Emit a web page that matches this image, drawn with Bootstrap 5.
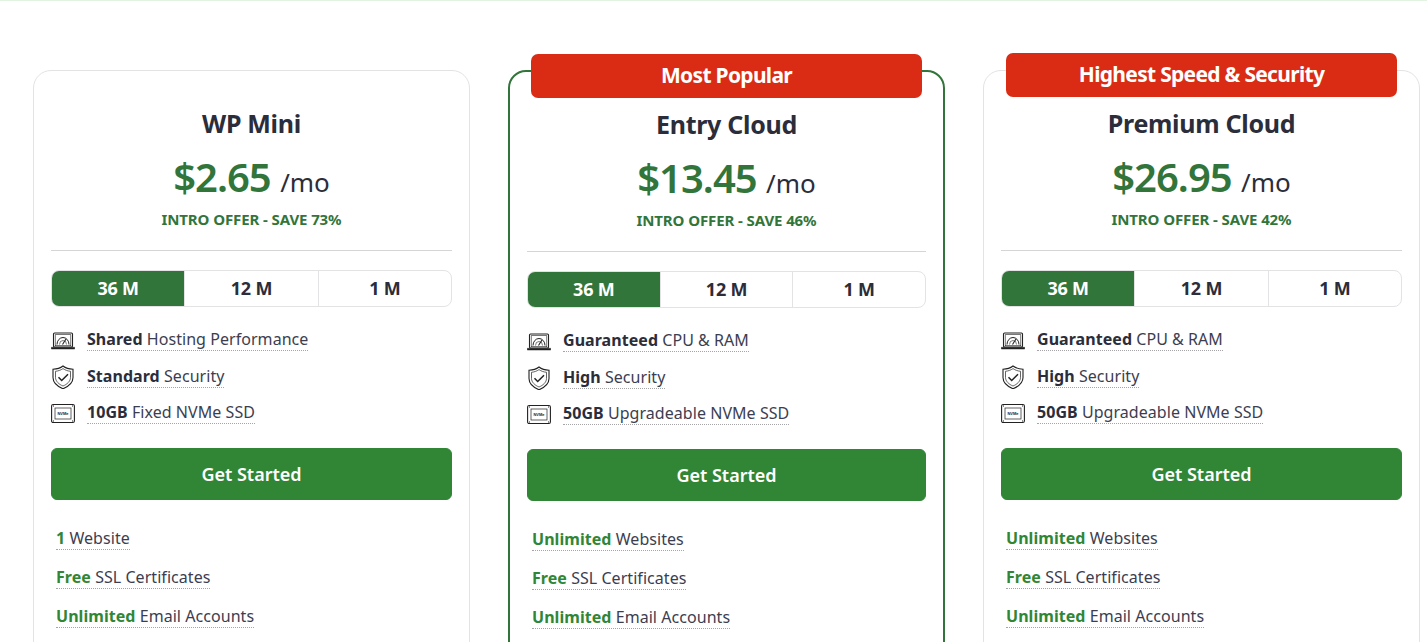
<!DOCTYPE html>
<html>
<head>
  <title>Cloud Hosting Plans</title>
  <link href="https://cdn.jsdelivr.net/npm/bootstrap@5.3.2/dist/css/bootstrap.min.css" rel="stylesheet">
  <style>
    html, body { height: 642px; overflow: hidden; }
    body { font-family: "Noto Sans", sans-serif; color: #2b2d3a; background: #fff; border-top: 1px solid #e2f3e2; }
    .plans { padding: 69px 0 0 33px; gap: 38px; }
    .plan { width: 437px; height: 640px; flex: none; border: 1px solid #e3e3e6; border-radius: 18px; padding: 0 17px; position: relative; text-align: center; }
    .plan-hot { border: 2px solid #32753a; }
    .ribbon { position: absolute; left: 21px; top: -18px; width: 391px; height: 44px; background: #da2c15; color: #fff; border-radius: 7px; font: 700 21px/42px "Noto Sans", sans-serif; letter-spacing: -.7px; }
    .plan-top .ribbon { left: 22px; }
    .plan-name { font-size: 25px; font-weight: 700; margin: 34px 0 0; line-height: 36px; letter-spacing: -.3px; }
    .price { color: #32753a; font-size: 40px; font-weight: 600; line-height: 56px; margin-top: 8px; letter-spacing: -1px; }
    .per { color: #2b2d3a; font-size: 26px; font-weight: 400; letter-spacing: 0; }
    .offer { color: #32753a; font-size: 15px; font-weight: 700; line-height: 20px; margin-top: -1px; letter-spacing: -.1px; }
    hr.rule { margin: 21px 0 19px; border-color: #d5d5d8; opacity: 1; }
    .terms { height: 37px; border: 1px solid #e3e3e6; border-radius: 8px; overflow: hidden; }
    .term { flex: 1; font-size: 18px; font-weight: 700; line-height: 35px; border-left: 1px solid #e3e3e6; letter-spacing: -.2px; }
    .term:first-child { border-left: 0; background: #32753a; color: #fff; }
    .specs { margin: 15px 0 0; padding: 0; list-style: none; text-align: left; }
    .specs li { display: flex; align-items: center; height: 36.5px; font-size: 16px; }
    .specs svg { width: 24px; height: 24px; margin-right: 12px; flex: none; }
    .dots { border-bottom: 1px dotted #a5a5a8; line-height: 21px; color: #3c3e50; letter-spacing: .05px; }
    .dots b { color: #2b2d3a; font-weight: 700; }
    .go { display: block; width: 100%; height: 52px; margin-top: 16px; background: #318636; border-color: #318636; border-radius: 6px; font-size: 18px; font-weight: 600; line-height: 38px; letter-spacing: 0; }
    .extras { margin: 20px 0 0; padding: 0 0 0 5px; list-style: none; text-align: left; }
    .extras li { height: 39px; font-size: 16px; display: flex; align-items: center; }
    .extras b { color: #318636; font-weight: 700; }
    .nvme { font: 700 4px "Liberation Sans", sans-serif; fill: #222; stroke: none; }
  </style>
</head>
<body>

  <svg width="0" height="0" class="position-absolute">
    <symbol id="ic-speed" viewBox="0 0 24 24" fill="none" stroke="#222" stroke-width="1.1">
      <rect x="2.500" y="5" width="19" height="14" rx="1"/>
      <rect x="4.200" y="6.700" width="15.600" height="11" stroke-width=".6"/>
      <path d="M.3 19.300h23.400v1.700h-23.400z" fill="#222" stroke-width=".5"/>
      <path d="M6 16.500a6 7 0 0 1 12 0" stroke-width="1"/>
      <path d="M8.500 16.500a3.500 4 0 0 1 7 0" stroke-width=".6"/>
      <path d="M11.500 16.500l3.500-5.500" stroke-width="1.100"/>
    </symbol>
    <symbol id="ic-shield" viewBox="0 0 24 24" fill="none" stroke="#222" stroke-width="1.1">
      <path d="M12 1c2.700 2.100 6.200 3.100 10 3.200v8.300c0 5.300-4.700 9-10 11.300-5.300-2.300-10-6-10-11.300v-8.300c3.800-.1 7.300-1.100 10-3.200z"/>
      <path d="M12 3.600c2.200 1.600 4.800 2.400 7.500 2.700v6.200c0 3.700-3.500 6.900-7.500 8.500-4-1.600-7.500-4.800-7.500-8.500v-6.200c2.700-.3 5.300-1.100 7.500-2.700z" stroke-width=".7"/>
      <path d="M7.500 12.300l3.200 3.200 6.300-6.300" stroke-width="1.500"/>
    </symbol>
  </svg>

  <div class="plans d-flex">

    <div class="plan">
      <h2 class="plan-name">WP Mini</h2>
      <div class="price">$2.65 <span class="per">/mo</span></div>
      <div class="offer">INTRO OFFER - SAVE 73%</div>
      <hr class="rule">
      <div class="terms d-flex"><div class="term">36 M</div><div class="term">12 M</div><div class="term">1 M</div></div>
      <ul class="specs">
        <li><svg><use href="#ic-speed"/></svg><span class="dots"><b>Shared</b> Hosting Performance</span></li>
        <li><svg><use href="#ic-shield"/></svg><span class="dots"><b>Standard</b> Security</span></li>
        <li><svg viewBox="0 0 24 24" fill="none" stroke="#222" stroke-width="1.1"><rect x=".6" y="3.500" width="22.800" height="18" rx="1.500"/><rect x="4" y="7" width="16" height="11" stroke-width=".7"/><text x="12" y="14" text-anchor="middle" class="nvme">NVMe</text><path d="M2 5h1M21 5h1M2 20h1M21 20h1"/></svg><span class="dots"><b>10GB</b> Fixed NVMe SSD</span></li>
      </ul>
      <a href="#" class="btn btn-success go">Get Started</a>
      <ul class="extras">
        <li><span class="dots"><b>1</b> Website</span></li>
        <li><span class="dots"><b>Free</b> SSL Certificates</span></li>
        <li><span class="dots"><b>Unlimited</b> Email Accounts</span></li>
      </ul>
    </div>

    <div class="plan plan-hot">
      <div class="ribbon">Most Popular</div>
      <h2 class="plan-name">Entry Cloud</h2>
      <div class="price">$13.45 <span class="per">/mo</span></div>
      <div class="offer">INTRO OFFER - SAVE 46%</div>
      <hr class="rule">
      <div class="terms d-flex"><div class="term">36 M</div><div class="term">12 M</div><div class="term">1 M</div></div>
      <ul class="specs">
        <li><svg><use href="#ic-speed"/></svg><span class="dots"><b>Guaranteed</b> CPU &amp; RAM</span></li>
        <li><svg><use href="#ic-shield"/></svg><span class="dots"><b>High</b> Security</span></li>
        <li><svg viewBox="0 0 24 24" fill="none" stroke="#222" stroke-width="1.1"><rect x=".6" y="3.500" width="22.800" height="18" rx="1.500"/><rect x="4" y="7" width="16" height="11" stroke-width=".7"/><text x="12" y="14" text-anchor="middle" class="nvme">NVMe</text><path d="M2 5h1M21 5h1M2 20h1M21 20h1"/></svg><span class="dots"><b>50GB</b> Upgradeable NVMe SSD</span></li>
      </ul>
      <a href="#" class="btn btn-success go">Get Started</a>
      <ul class="extras">
        <li><span class="dots"><b>Unlimited</b> Websites</span></li>
        <li><span class="dots"><b>Free</b> SSL Certificates</span></li>
        <li><span class="dots"><b>Unlimited</b> Email Accounts</span></li>
      </ul>
    </div>

    <div class="plan plan-top">
      <div class="ribbon">Highest Speed &amp; Security</div>
      <h2 class="plan-name">Premium Cloud</h2>
      <div class="price">$26.95 <span class="per">/mo</span></div>
      <div class="offer">INTRO OFFER - SAVE 42%</div>
      <hr class="rule">
      <div class="terms d-flex"><div class="term">36 M</div><div class="term">12 M</div><div class="term">1 M</div></div>
      <ul class="specs">
        <li><svg><use href="#ic-speed"/></svg><span class="dots"><b>Guaranteed</b> CPU &amp; RAM</span></li>
        <li><svg><use href="#ic-shield"/></svg><span class="dots"><b>High</b> Security</span></li>
        <li><svg viewBox="0 0 24 24" fill="none" stroke="#222" stroke-width="1.1"><rect x=".6" y="3.500" width="22.800" height="18" rx="1.500"/><rect x="4" y="7" width="16" height="11" stroke-width=".7"/><text x="12" y="14" text-anchor="middle" class="nvme">NVMe</text><path d="M2 5h1M21 5h1M2 20h1M21 20h1"/></svg><span class="dots"><b>50GB</b> Upgradeable NVMe SSD</span></li>
      </ul>
      <a href="#" class="btn btn-success go">Get Started</a>
      <ul class="extras">
        <li><span class="dots"><b>Unlimited</b> Websites</span></li>
        <li><span class="dots"><b>Free</b> SSL Certificates</span></li>
        <li><span class="dots"><b>Unlimited</b> Email Accounts</span></li>
      </ul>
    </div>

  </div>

  <script src="https://cdn.jsdelivr.net/npm/bootstrap@5.3.2/dist/js/bootstrap.bundle.min.js"></script>
</body>
</html>
